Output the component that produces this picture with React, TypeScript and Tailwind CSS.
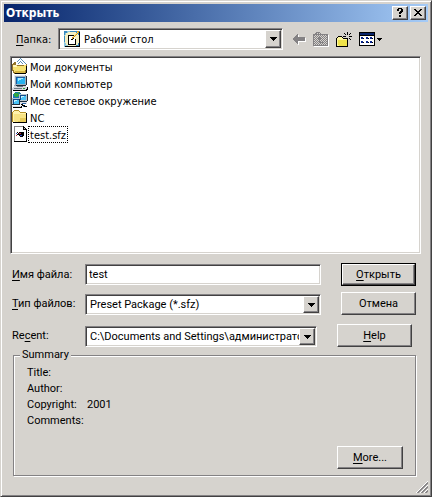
import { useState } from "react";
import type { ReactNode } from "react";
import clsx from "clsx";

const sunken =
  "border border-t-[#848284] border-l-[#848284] border-r-white border-b-white bg-white shadow-[inset_1px_1px_#424142,inset_-1px_-1px_#d6d3ce]";
const raised =
  "border border-t-white border-l-white border-r-[#424142] border-b-[#424142] bg-[#d6d3ce] shadow-[inset_-1px_-1px_#848284]";
const tahoma = "font-['DejaVu_Sans_Condensed','DejaVu_Sans',sans-serif] text-[11px]";

const Key = ({ children }: { children: ReactNode }) => (
  <span className="underline underline-offset-2">{children}</span>
);

const Icon = ({ children, className }: { children: ReactNode; className?: string }) => (
  <svg viewBox="0 0 16 16" shapeRendering="crispEdges" aria-hidden="true" className={clsx("size-4 shrink-0", className)}>
    {children}
  </svg>
);

const DesktopIcon = ({ className }: { className?: string }) => (
  <Icon className={className}>
    <path fill="#3a8ac0" d="M0 0h16v16H0z" />
    <path fill="#8cc7de" d="M0 4h1V2h2V0h3v1H4v2H2v2H0zM0 11h2v2h2v2h3v1H0z" />
    <path fill="#f4efc4" d="M4 1h8v1h2v2h1v8h-1v2h-2v1H4v-1H2v-2H1V4h1V2h2z" />
    <path fill="#000" d="M4 4h7v1H5v8h6V8h1v6H4zM15 1h1v15H1v-1h14z" />
    <path fill="#fff" d="M5 5h6v8H5z" />
    <path fill="#d29420" d="M13 0h2v2h-1v1h-1v1h-1v1h-1v1h-1v1H9v1H8V6h1V5h1V4h1V3h1V2h1z" />
    <path fill="#ffe36b" d="M13 1h1v1h-1v1h-1v1h-1v1h-1v1H9V5h1V4h1V3h1V2h1z" />
    <path fill="#000" d="M7 8h2v1H7zM9 7h1v1H9z" />
  </Icon>
);

const DocumentsIcon = () => (
  <Icon>
    <path fill="#94752a" d="M0 6h1V5h1V4h3v1h9v1h1v9h-1v1H2v-1H1v-2H0z" />
    <path fill="#fff" d="M4 7V4h1V3h1V2h1V1h1V0h1v1h1v1h1v1h1v1h1v1h1v2z" />
    <path fill="#5a8eb5" d="M8 0h1v1H8zM7 1h1v1H7zM6 2h1v1H6zM5 3h1v1H5zM9 1h1v1H9zM10 2h1v1h-1zM11 3h1v1h-1zM12 4h1v1h-1zM13 5h1v1h-1zM8 3h1v1H8zM7 4h1v1H7zM6 5h1v1H6zM9 4h1v1H9zM10 5h1v1h-1z" />
    <path fill="#f7e373" d="M1 7h4v1h7V7h2v5h-1v3H3v-1H2v-2H1z" />
    <path fill="#fff7bd" d="M1 7h3v1h1v1H1z" />
    <path fill="#d6b642" d="M3 13h10v2H3z" />
    <path fill="#000" d="M14 8h1v7h-1v1H3v-1h11z" />
  </Icon>
);

const ComputerIcon = () => (
  <Icon>
    <path fill="#9caebd" d="M2 0h12v1h1v9h-1v1H2z" />
    <path fill="#e7ebef" d="M2 0h11v1H3v9H2z" />
    <path fill="#185aa5" d="M4 2h9v7H4z" />
    <path fill="#29b2ef" d="M5 3h8v6H5z" />
    <path fill="#a5ebff" d="M6 3h5v1H9v1H7v1H6z" />
    <path fill="#212c39" d="M14 1h1v9h-1v1H4v-1h10z" />
    <path fill="#d6d7de" d="M1 12h1v-1h12v1h1v2h-1v1H0v-2h1z" />
    <path fill="#6b7984" d="M2 13h8v1H2zM5 11h6v1H5z" />
    <path fill="#31a639" d="M11 13h2v1h-2z" />
    <path fill="#000" d="M15 12h1v3h-1v1H1v-1h13v-1h1z" />
  </Icon>
);

const NetworkIcon = () => (
  <Icon>
    <path fill="#1878b5" d="M2 1h1V0h5v1h1v1h1v5H8v1H2V7H1V2h1z" />
    <path fill="#31a642" d="M2 1h4v1h2v2H6v1H3V4H2zM6 0h2v1H6z" />
    <path fill="#b5c3ce" d="M7 2h8v7H7zM0 6h8v7H0z" />
    <path fill="#104a8c" d="M8 3h6v5H8zM1 7h6v5H1z" />
    <path fill="#4ac3f7" d="M9 4h5v4H9zM2 8h5v4H2z" />
    <path fill="#c6f3ff" d="M9 4h3v1h-2v1H9zM2 8h3v1H3v1H2z" />
    <path fill="#21303f" d="M15 2h1v7h-1v1H8V9h7zM7 7h1v6H0v-1h7z" />
    <path fill="#dedfe7" d="M0 14h9v1H0zM8 10h7v2H8z" />
    <path fill="#000" d="M1 15h9v1H1zM9 12h2v1h2v1h2v1h-3v-1h-2v-1H9zM9 14h1v1H9z" />
    <path fill="#2965a5" d="M10 11h4v1h-4zM11 14h1v1h-1z" />
  </Icon>
);

const FolderIcon = () => (
  <Icon>
    <path fill="#b5922a" d="M1 2h1V1h5v1h1v1h6v1h1v9H0V3h1z" />
    <path fill="#fff3ad" d="M2 2h5v1h1v1h6v9H1V3h1z" />
    <path fill="#f7e384" d="M2 5h12v8H3v-1H2z" />
    <path fill="#e7cb5a" d="M8 9h6v4H6v-1h2z" />
    <path fill="#000" d="M14 4h1v10H1v-1h13z" />
  </Icon>
);

const PresetIcon = () => (
  <Icon>
    <path fill="#848284" d="M2 0h9v1H3v14H2z" />
    <path fill="#fff" d="M3 1h8v3h3v11H3z" />
    <path fill="#000" d="M11 0h1v1h1v1h1v1h1v13H2v-1h12V4h-3z" />
    <path fill="#b5b2b5" d="M12 2h1v1h-1z" />
    <path fill="#000" d="M5 6h1v1h1V6h5v4h-1v1H8v-1H7V9H5V8h1V7H5z" />
    <path fill="#c62c4a" d="M7 7h2v1H7zM4 9h1v1H4z" />
    <path fill="#314ac6" d="M8 9h2v1H8zM4 7h1v1H4z" />
  </Icon>
);

const files = [
  { name: "Мои документы", icon: <DocumentsIcon /> },
  { name: "Мой компьютер", icon: <ComputerIcon /> },
  { name: "Мое сетевое окружение", icon: <NetworkIcon /> },
  { name: "NC", icon: <FolderIcon /> },
  { name: "test.sfz", icon: <PresetIcon /> },
];

const summary = [
  ["Title:", ""],
  ["Author:", ""],
  ["Copyright:", "2001"],
  ["Comments:", ""],
];

type ComboProps = {
  id: string;
  value: string;
  className?: string;
  selectClass?: string;
  icon?: ReactNode;
};

const Combo = ({ id, value, className, selectClass, icon }: ComboProps) => (
  <div className={clsx("grid min-w-0 items-center", sunken, className)}>
    <select
      id={id}
      className={clsx("col-start-1 row-start-1 mr-[17px] min-w-0 appearance-none bg-transparent outline-none", selectClass)}
    >
      <option>{value}</option>
    </select>
    {icon}
    <span
      className={clsx(
        "pointer-events-none col-start-1 row-start-1 m-px flex w-4 items-center justify-center self-stretch justify-self-end",
        raised
      )}
    >
      <svg viewBox="0 0 7 4" shapeRendering="crispEdges" className="h-1 w-[7px]" aria-hidden="true">
        <path d="M0 0h7v1H6v1H5v1H4v1H3V3H2V2H1V1H0z" />
      </svg>
    </span>
  </div>
);

const TitleBar = () => (
  <header className="flex h-[18px] items-center bg-linear-to-r from-[#08246b] to-[#a5cbf7] px-0.5">
    <h1 className="flex-1 font-['DejaVu_Sans_Condensed','DejaVu_Sans',sans-serif] text-xs font-bold text-white">
      Открыть
    </h1>
    <div className="flex gap-0.5">
      <button type="button" aria-label="Help" className={clsx("flex h-3.5 w-4 justify-center pt-px", raised)}>
        <svg viewBox="0 0 6 9" shapeRendering="crispEdges" className="h-[9px] w-1.5">
          <path d="M1 0h4v1h1v3H5v1H4v1H2V4h1V3h1V1H2v2H0V1h1zM2 7h2v2H2z" />
        </svg>
      </button>
      <button type="button" aria-label="Close" className={clsx("flex h-3.5 w-4 justify-center pt-0.5", raised)}>
        <svg viewBox="0 0 8 7" shapeRendering="crispEdges" className="h-[7px] w-2">
          <path d="M0 0h2v1h1v1h2V1h1V0h2v1H7v1H6v1H5v1h1v1h1v1h1v1H6V6H5V5H3v1H2v1H0V6h1V5h1V4h1V3H2V2H1V1H0z" />
        </svg>
      </button>
    </div>
  </header>
);

const Toolbar = () => (
  <div className="flex items-center">
    <button type="button" aria-label="Back" disabled>
      <svg viewBox="0 0 14 11" shapeRendering="crispEdges" className="h-[11px] w-3.5">
        <path fill="#fff" d="M6 1h1v3h7v4H7v3H6v-1H5V9H4V8H3V7h3z" />
        <path fill="#848284" d="M0 5h1V4h1V3h1V2h1V1h1V0h1v3h7v4H6v3H5V9H4V8H3V7H2V6H1V5z" />
      </svg>
    </button>
    <button type="button" aria-label="Up" disabled className="ml-[7px]">
      <svg viewBox="0 0 16 15" shapeRendering="crispEdges" className="h-[15px] w-4">
        <defs>
          <pattern id="dither" width="2" height="2" patternUnits="userSpaceOnUse">
            <path fill="#848284" d="M0 0h1v1H0zM1 1h1v1H1z" />
          </pattern>
        </defs>
        <path fill="#fff" d="M15 3h1v12H1v-1h14z" />
        <path fill="#848284" d="M2 1h1V0h4v1h1v1h7v12H0V2h2z" />
        <path fill="#d6d3ce" d="M3 1h4v1H3zM1 3h13v10H1z" />
        <path fill="url(#dither)" d="M3 1h4v1H3zM1 3h13v10H1z" />
        <path fill="#848284" d="M5 5h2v1h1v1H7v3h4v1H6V7H4V6h1z" />
      </svg>
    </button>
    <button type="button" aria-label="New folder" className="ml-[7px]">
      <svg viewBox="0 0 16 15" shapeRendering="crispEdges" className="h-[15px] w-4">
        <path d="M0 6h1V5h1V4h4v1h1v1h5v9H0z" />
        <path fill="#fff79c" d="M2 5h4v1h1v1h4v7H1V6h1z" />
        <path fill="#efe34a" d="M2 8h9v6H3v-1H2z" />
        <path d="M11 0h1v3h-1zM8 1h1v1H8zM9 2h1v1H9zM14 1h1v1h-1zM13 2h1v1h-1zM7 4h3v1H7zM13 4h3v1h-3zM9 6h1v1H9zM13 6h1v1h-1zM14 7h1v1h-1zM11 6h1v3h-1z" />
      </svg>
    </button>
    <button type="button" aria-label="View" className="ml-[7px] flex items-center gap-0.5">
      <svg viewBox="0 0 16 14" shapeRendering="crispEdges" className="h-3.5 w-4">
        <path d="M0 0h16v14H0z" />
        <path fill="#08246b" d="M1 1h14v2H1z" />
        <path fill="#fff" d="M1 4h14v9H1z" />
        <path fill="#08248c" d="M2 5h2v2H2zM7 5h2v2H7zM11 5h2v2h-2zM2 9h2v2H2zM7 9h2v2H7zM11 9h2v2h-2z" />
        <path d="M4 6h1v1H4zM9 6h1v1H9zM13 6h1v1h-1zM4 10h1v1H4zM9 10h1v1H9zM13 10h1v1h-1z" />
      </svg>
      <svg viewBox="0 0 5 3" shapeRendering="crispEdges" className="h-[3px] w-[5px]">
        <path d="M0 0h5v1H4v1H3v1H2V2H1V1H0z" />
      </svg>
    </button>
  </div>
);

const App = () => {
  const [fileName, setFileName] = useState("test");
  const [selected, setSelected] = useState("test.sfz");

  const handlePick = (name: string) => {
    setSelected(name);
    setFileName(name.replace(/\.sfz$/, ""));
  };

  return (
    <div className="flex min-h-screen flex-col border border-t-[#d6d3ce] border-r-[#424142] border-b-[#424142] border-l-[#d6d3ce] bg-[#d6d3ce] p-[3px] font-[Roboto,'Liberation_Sans',sans-serif] text-[11px] leading-4 text-black shadow-[inset_1px_1px_#fff,inset_-1px_-1px_#848284]">
      <TitleBar />

      <div className="mt-1.5 flex items-center gap-[9px] pr-[46px] pl-3">
        <div className="flex min-w-0 flex-1 items-center">
          <label htmlFor="folder" className={clsx("w-[42px] shrink-0 pt-0.5", tahoma)}>
            <Key>П</Key>апка:
          </label>
          <Combo
            id="folder"
            value="Рабочий стол"
            className="h-[22px] flex-1"
            selectClass={clsx("pt-px pl-[25px]", tahoma)}
            icon={<DesktopIcon className="pointer-events-none col-start-1 row-start-1 ml-[5px]" />}
          />
        </div>
        <Toolbar />
      </div>

      <ul className={clsx("mt-1.5 mr-[7px] ml-1.5 min-h-[197px] flex-1 p-px", tahoma, sunken)}>
        {files.map((file) => (
          <li key={file.name} className="h-[17px]">
            <button type="button" onClick={() => handlePick(file.name)} className="flex items-start">
              {file.icon}
              <span
                className={clsx(
                  "border border-dotted px-px pt-0.5 leading-[13px]",
                  selected === file.name ? "border-black" : "border-transparent"
                )}
              >
                {file.name}
              </span>
            </button>
          </li>
        ))}
      </ul>

      <form className="mt-[9px] pr-3 pl-2" onSubmit={(e) => e.preventDefault()}>
        <div className="flex items-center">
          <label htmlFor="file-name" className="w-[73px] shrink-0">
            <Key>И</Key>мя файла:
          </label>
          <input
            id="file-name"
            type="text"
            value={fileName}
            onChange={(e) => setFileName(e.target.value)}
            className={clsx("mr-5 h-[21px] min-w-0 flex-1 px-[3px] outline-none", sunken)}
          />
          <button type="submit" className="h-[23px] w-[75px] border border-black">
            <span className={clsx("flex h-full items-center justify-center", raised)}>
              <span>
                <Key>О</Key>ткрыть
              </span>
            </span>
          </button>
        </div>
        <div className="mt-1.5 flex items-center">
          <label htmlFor="file-type" className="w-[73px] shrink-0">
            <Key>Т</Key>ип файлов:
          </label>
          <Combo id="file-type" value="Preset Package (*.sfz)" className="mr-5 h-[21px] flex-1 self-end" selectClass="pl-1" />
          <button type="button" className={clsx("h-[23px] w-[75px]", raised)}>
            Отмена
          </button>
        </div>
        <div className="mt-[9px] flex items-center pr-1">
          <label htmlFor="recent" className="w-[73px] shrink-0">
            Re<Key>c</Key>ent:
          </label>
          <Combo
            id="recent"
            value="C:\Documents and Settings\администратор"
            className="mr-5 h-[21px] flex-1 self-end"
            selectClass="pl-1"
          />
          <button type="button" className={clsx("h-[23px] w-[75px]", raised)}>
            <Key>H</Key>elp
          </button>
        </div>
      </form>

      <fieldset className="mt-0.5 mr-3 ml-[9px] border border-[#848284] px-3 pb-1.5 shadow-[1px_1px_#fff,inset_1px_1px_#fff]">
        <legend className="-ml-1.5 bg-[#d6d3ce] px-0.5 leading-3">Summary</legend>
        <dl className="mt-1 mb-[17px]">
          {summary.map(([label, value]) => (
            <div key={label} className="flex h-4 pl-px">
              <dt className="w-[60px] shrink-0">{label}</dt>
              <dd>{value}</dd>
            </div>
          ))}
        </dl>
        <div className="flex justify-end">
          <button type="button" className={clsx("h-[23px] w-[66px]", raised)}>
            <Key>M</Key>ore...
          </button>
        </div>
      </fieldset>

      <footer className="mt-[5px] flex justify-end">
        <svg viewBox="0 0 12 12" className="size-3" aria-hidden="true">
          <path stroke="#848284" strokeWidth="1.6" d="M1.5 12L12 1.5M5.5 12L12 5.5M9.5 12L12 9.5" />
          <path stroke="#fff" strokeWidth="1" d="M0 12L12 0M4 12l8-8M8 12l4-4" />
        </svg>
      </footer>
    </div>
  );
};

export default App;
